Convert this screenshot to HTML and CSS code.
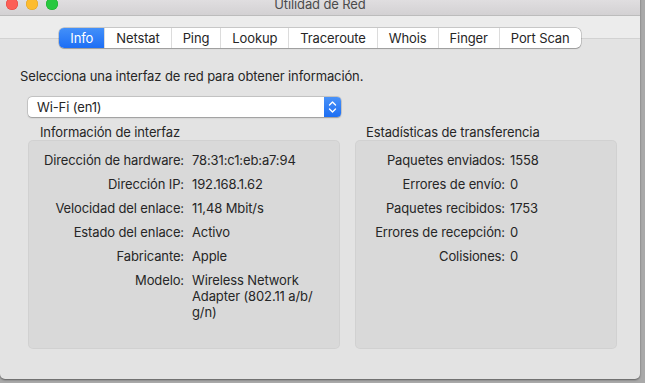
FILE: index.html
```html
<!DOCTYPE html>
<html lang="es">
<head>
<meta charset="utf-8">
<title>Utilidad de Red</title>
<link rel="stylesheet" href="styles.css">
</head>
<body>
<div class="window">
  <header class="titlebar">
    <div class="lights">
      <span class="light red"></span>
      <span class="light yellow"></span>
      <span class="light green"></span>
    </div>
    <div class="title">Utilidad de Red</div>
    <div></div>
  </header>
  <div class="toolbar">
    <nav class="tabs">
      <span class="tab active">Info</span>
      <span class="tab">Netstat</span>
      <span class="tab">Ping</span>
      <span class="tab">Lookup</span>
      <span class="tab">Traceroute</span>
      <span class="tab">Whois</span>
      <span class="tab">Finger</span>
      <span class="tab">Port Scan</span>
    </nav>
  </div>
  <main class="content">
    <p class="intro">Selecciona una interfaz de red para obtener información.</p>
    <div class="popup">
      <span class="popup-label">Wi-Fi (en1)</span>
      <span class="stepper">
        <svg width="17" height="20" viewBox="0 0 17 20">
          <path d="M5.5 8 L8.5 5 L11.5 8" fill="none" stroke="#fff" stroke-width="1.4" stroke-linecap="round" stroke-linejoin="round"/>
          <path d="M5.5 12 L8.5 15 L11.5 12" fill="none" stroke="#fff" stroke-width="1.4" stroke-linecap="round" stroke-linejoin="round"/>
        </svg>
      </span>
    </div>
    <div class="groups">
      <section class="group group-left">
        <h2 class="group-title">Información de interfaz</h2>
        <dl class="box box-left">
          <dt>Dirección de hardware:</dt><dd>78:31:c1:eb:a7:94</dd>
          <dt>Dirección IP:</dt><dd>192.168.1.62</dd>
          <dt>Velocidad del enlace:</dt><dd>11,48 Mbit/s</dd>
          <dt>Estado del enlace:</dt><dd>Activo</dd>
          <dt>Fabricante:</dt><dd>Apple</dd>
          <dt>Modelo:</dt><dd>Wireless Network<br>Adapter (802.11 a/b/<br>g/n)</dd>
        </dl>
      </section>
      <section class="group group-right">
        <h2 class="group-title">Estadísticas de transferencia</h2>
        <dl class="box box-right">
          <dt>Paquetes enviados:</dt><dd>1558</dd>
          <dt>Errores de envío:</dt><dd>0</dd>
          <dt>Paquetes recibidos:</dt><dd>1753</dd>
          <dt>Errores de recepción:</dt><dd>0</dd>
          <dt>Colisiones:</dt><dd>0</dd>
        </dl>
      </section>
    </div>
  </main>
</div>
</body>
</html>
```
FILE: styles.css
```css
* { box-sizing: border-box; }
html, body { margin: 0; padding: 0; }
body {
  width: 645px;
  height: 383px;
  overflow: hidden;
  background: #a9a9a9;
  font-family: "Inter", "Noto Sans", sans-serif;
  font-size: 13px;
  letter-spacing: -0.12px;
  color: #262626;
}
.window {
  width: 640px;
  height: 386px;
  margin-top: -7px;
  background: #e3e3e3;
  border-radius: 0 0 5px 5px;
  overflow: hidden;
  box-shadow: 0 1px 2px rgba(0,0,0,0.45);
  display: flex;
  flex-direction: column;
}
.titlebar {
  height: 23px;
  flex: none;
  display: grid;
  grid-template-columns: 1fr auto 1fr;
  align-items: center;
  background: linear-gradient(#e6e4e6, #d3d1d3);
  border-bottom: 1px solid #bcbcbc;
}
.lights {
  display: flex;
  gap: 8px;
  padding-left: 6px;
}
.light {
  width: 12px;
  height: 12px;
  border-radius: 50%;
}
.red { background: #fc5f57; box-shadow: inset 0 0 0 0.5px #e0443e; }
.yellow { background: #fdbc2e; box-shadow: inset 0 0 0 0.5px #dea123; }
.green { background: #28c840; box-shadow: inset 0 0 0 0.5px #1aab29; }
.title {
  color: #4b4b4b;
  line-height: 16px;
}
.toolbar {
  height: 23px;
  flex: none;
  background: #ececec;
  border-bottom: 1px solid #d2d2d2;
  display: flex;
  justify-content: center;
  align-items: flex-end;
}
.tabs {
  position: relative;
  z-index: 1;
  display: flex;
  height: 20px;
  margin-bottom: -10px;
  background: #fff;
  border-radius: 5px;
  box-shadow: 0 0 0 0.5px rgba(0,0,0,0.28), 0 0.5px 1px rgba(0,0,0,0.2);
}
.tab {
  padding: 0 11px;
  line-height: 20px;
  border-left: 1px solid #dcdcdc;
  white-space: nowrap;
}
.tab:first-child { border-left: none; border-radius: 5px 0 0 5px; }
.tab:last-child { border-radius: 0 5px 5px 0; }
.tab.active {
  color: #fff;
  background: linear-gradient(#4390f9, #1d6ef5);
}
.content {
  flex: 1;
  padding: 29px 0 0 20px;
}
.intro {
  margin: 0;
  line-height: 16px;
}
.popup {
  margin: 13px 0 0 8px;
  width: 313px;
  height: 20px;
  display: flex;
  align-items: center;
  background: #fff;
  border-radius: 4px;
  box-shadow: 0 0 0 0.5px rgba(0,0,0,0.2), 0 0.5px 1.5px rgba(0,0,0,0.25);
}
.popup-label {
  flex: 1;
  padding-left: 9px;
  line-height: 20px;
}
.stepper {
  width: 17px;
  height: 20px;
  display: flex;
  border-radius: 0 4px 4px 0;
  background: linear-gradient(#4992f8, #1d6ef3);
}
.groups {
  margin: 8px 0 0 8px;
  display: grid;
  grid-template-columns: 312px 262px;
  column-gap: 15px;
}
.group-title {
  margin: 0;
  font-size: 13px;
  font-weight: normal;
  line-height: 15px;
}
.group-left .group-title { padding-left: 12px; }
.group-right .group-title { padding-left: 11px; }
.box {
  margin: 0;
  height: 209px;
  padding-top: 12px;
  background: #d9d9d9;
  border-radius: 5px;
  box-shadow: inset 0 0 0 1px rgba(0,0,0,0.035);
  display: grid;
  align-content: start;
  row-gap: 8px;
  line-height: 16px;
}
.box-left { grid-template-columns: 156px 1fr; column-gap: 8px; }
.box-right { grid-template-columns: 150px 1fr; column-gap: 5px; }
.box dt { text-align: right; white-space: nowrap; }
.box dd { margin: 0; white-space: nowrap; }
```
